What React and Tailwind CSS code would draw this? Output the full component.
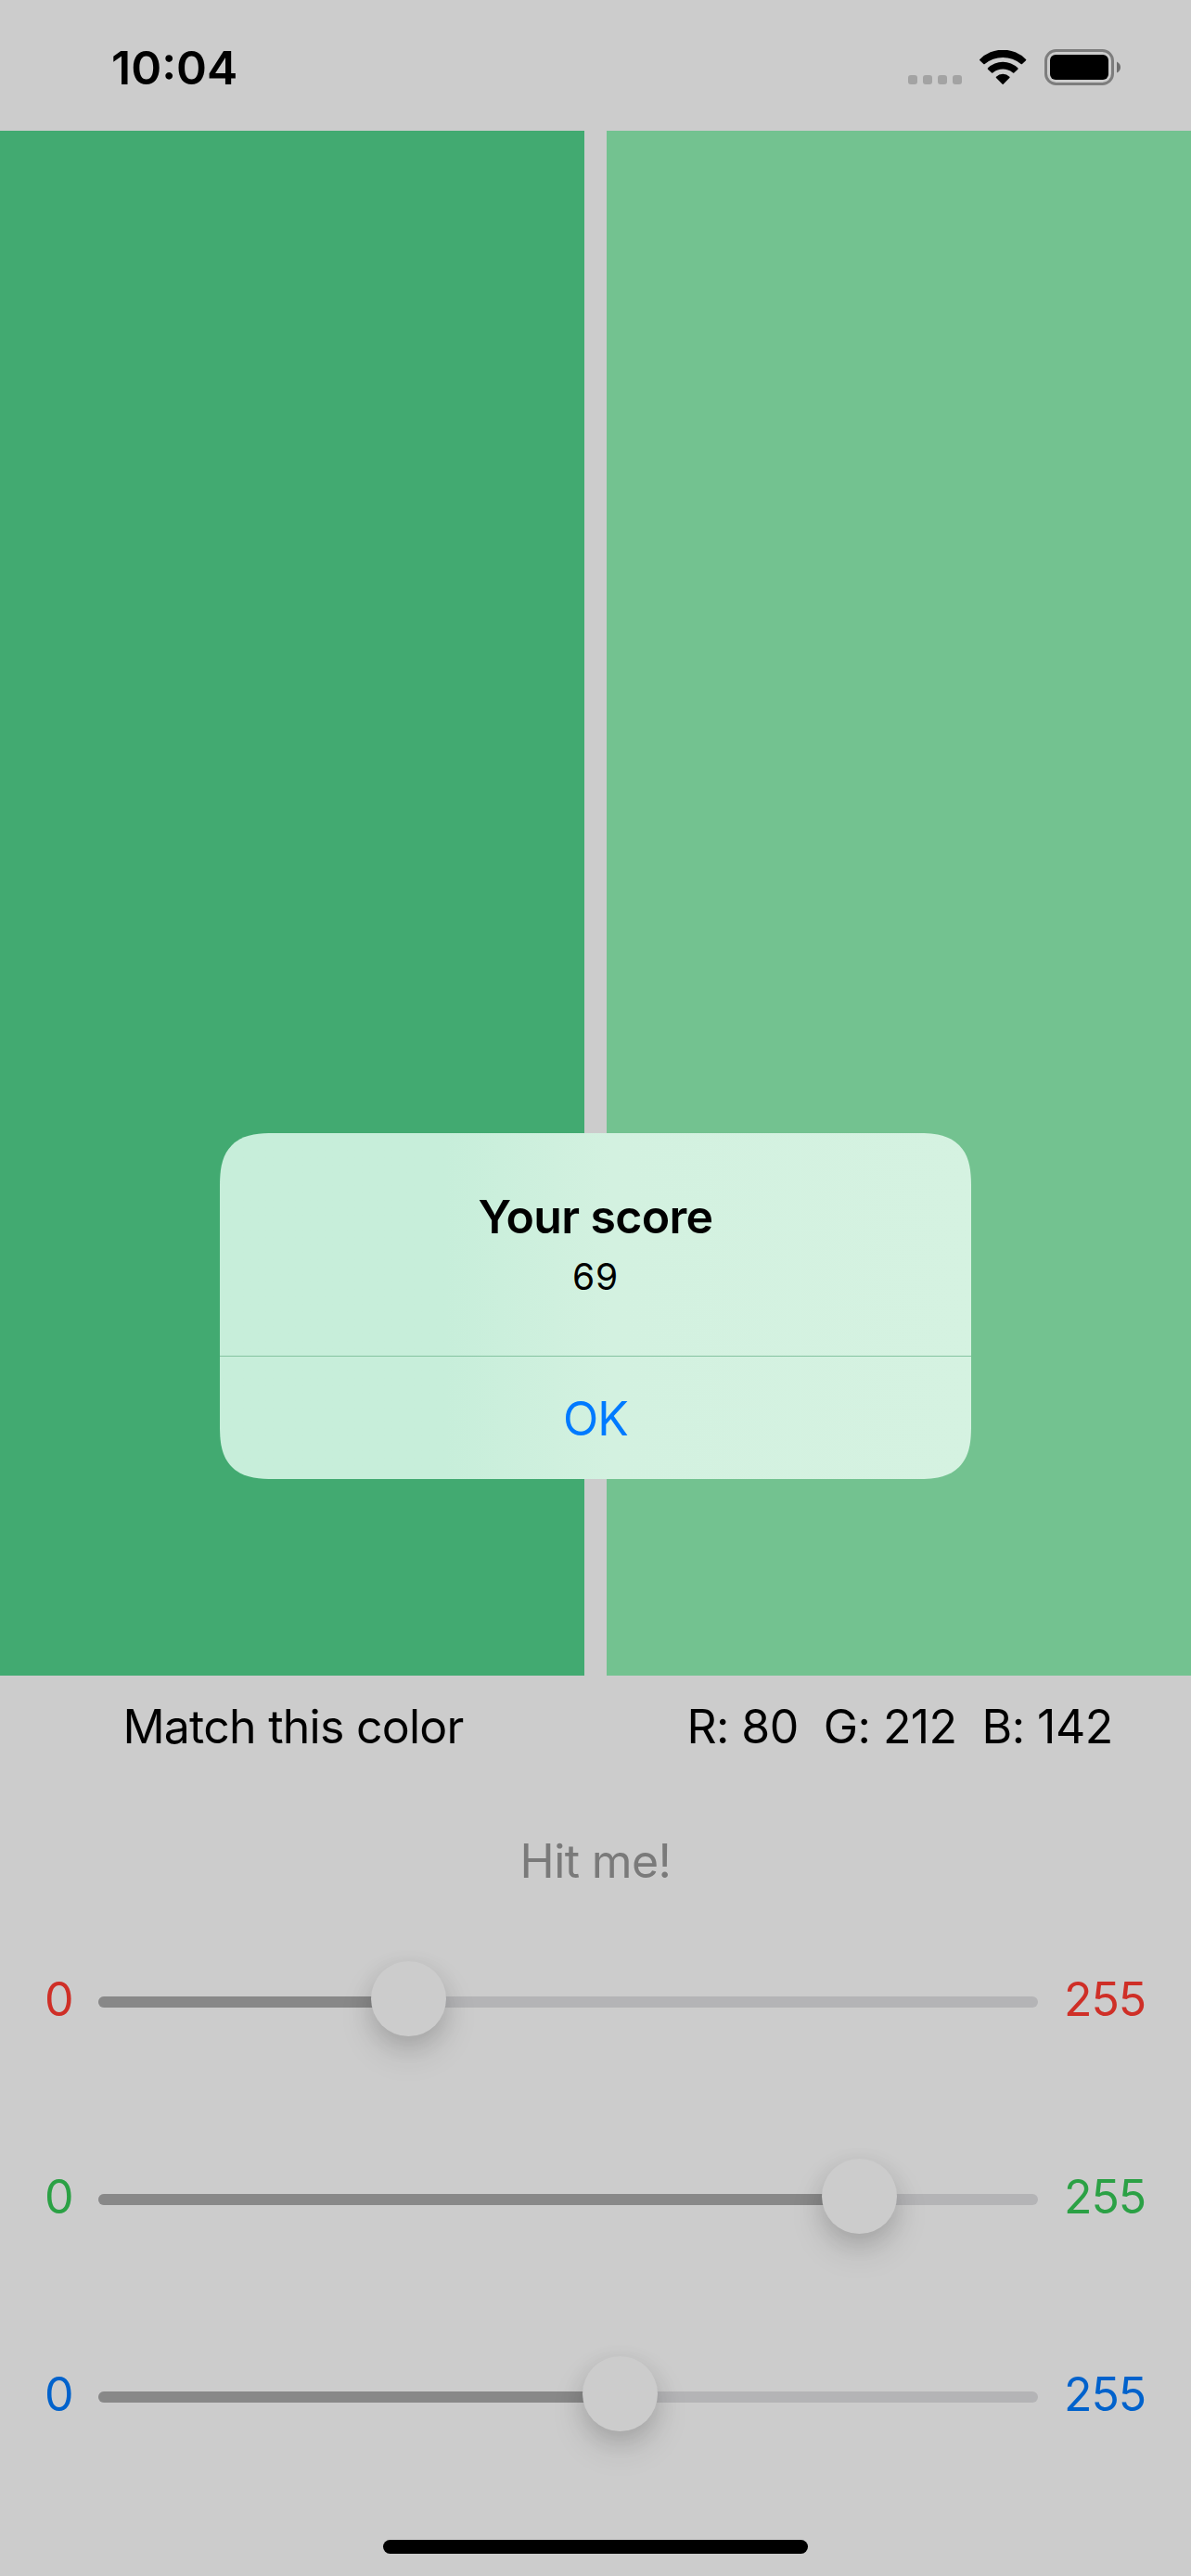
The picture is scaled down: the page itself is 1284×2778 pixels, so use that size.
const channels = [
  { name: "red", value: 80, color: "text-[#cf2f27]", left: 294 },
  { name: "green", value: 212, color: "text-[#2ba145]", left: 780 },
  { name: "blue", value: 142, color: "text-[#0062cc]", left: 522 },
];

function StatusBar() {
  return (
    <header className="flex h-[141px] shrink-0 items-start justify-between pl-[120px] pr-[76px]">
      <time className="mt-[43px] text-[50px] leading-[60px] font-semibold">10:04</time>
      <div className="mt-[53px] flex h-[39px]">
        <div className="mt-7 mr-[19.5px] flex gap-1.5">
          {[0, 1, 2, 3].map((n) => (
            <span key={n} className="size-2.5 rounded-[3px] bg-[#a3a3a3]" />
          ))}
        </div>
        <svg className="mt-px mr-[19.5px] h-[37px] w-[50.33px]" viewBox="289 72 151 111">
          <path d="M290 102 A105 105 0 0 1 439 102 Q441 104 439 106 L427 117 Q425 119 423 117 A91 91 0 0 0 306 117 Q304 119 302 117 L290 106 Q288 104 290 102Z" />
          <path d="M316 130 A69 69 0 0 1 413 130 Q415 132 413 134 L400 146 Q398 147 396 145 A49.5 49.5 0 0 0 333 145 Q331 147 329 146 L316 134 Q314 132 316 130Z" />
          <path d="M343 158 A31 31 0 0 1 386 158 Q388 160 386 162 L366 182 Q364.5 183.500 363 182 L343 162 Q341 160 343 158Z" />
        </svg>
        <svg className="h-[39px] w-[82px]" viewBox="0 0 82 39">
          <rect x="1.5" y="1.5" width="72" height="36" rx="11" fill="none" stroke="#7d7d7d" strokeWidth="3" />
          <rect x="6" y="6" width="63" height="27" rx="6" />
          <path d="M78 13.500 Q82 15.500 82 19.500 Q82 23.500 78 25.500Z" fill="#6e6e6e" />
        </svg>
      </div>
    </header>
  );
}

function Slider({ channel }) {
  return (
    <div className="flex h-[213px] items-start">
      <span className={`mt-[31px] w-[106px] pl-12 text-[50px] leading-[60px] ${channel.color}`}>0</span>
      <div className="relative mt-[58px] h-3 w-[1013px] rounded-full bg-[#b4b4b6]">
        <div className="h-3 rounded-l-full bg-[#888888]" style={{ width: channel.left + 40 }} />
        <div
          className="absolute -top-[38px] size-[81px] rounded-full bg-[#cccccc] shadow-[0_18px_39px_rgba(0,0,0,0.11),0_9px_24px_rgba(0,0,0,0.12)]"
          style={{ left: channel.left }}
        />
      </div>
      <span className={`mt-[31px] ml-7 text-[50px] leading-[60px] tracking-[-0.022em] ${channel.color}`}>255</span>
    </div>
  );
}

function ScoreAlert() {
  return (
    <div
      role="alertdialog"
      className="absolute top-[1222px] left-[237px] flex h-[373px] w-[810px] flex-col overflow-hidden rounded-[44px] bg-linear-to-r from-[#c7eeda] from-30% via-[#d3f1e0] via-52% to-[#d5f2e1] text-center supports-[corner-shape:squircle]:rounded-[58px] supports-[corner-shape:squircle]:[corner-shape:superellipse(1.45)]"
    >
      <div className="flex h-60 flex-col items-center pt-[60px]">
        <h1 className="text-[50px] leading-[60px] font-semibold tracking-[-0.013em]">Your score</h1>
        <p className="mt-[11px] text-[39px] leading-[48px] tracking-[0.02em]">69</p>
      </div>
      <div className="h-px bg-[#85c3a1]" />
      <button className="h-[132px] pt-[2px] text-[50px] leading-[60px] tracking-[-0.02em] text-[#007aff]">OK</button>
    </div>
  );
}

export default function App() {
  return (
    <main className="relative flex h-[2778px] w-[1284px] flex-col overflow-hidden bg-[#cccccc] font-['Inter',sans-serif] text-black">
      <StatusBar />
      <section className="flex h-[1666px] shrink-0 gap-6">
        <div className="flex-1 bg-[#42aa71]" />
        <div className="flex-1 bg-[#73c290]" />
      </section>
      <section className="flex h-[110px] shrink-0 gap-6 pt-[25px] text-center text-[50px] leading-[60px]">
        <p className="flex-1 pl-0.5 tracking-[-0.015em]">Match this color</p>
        <p className="flex-1 pl-0.5 tracking-[-0.011em] whitespace-pre">R: 80  G: 212  B: 142</p>
      </section>
      <button className="mt-[60px] h-[60px] text-center text-[50px] leading-[60px] tracking-[-0.012em] text-[#7a7a7a]">Hit me!</button>
      <section className="mt-[58px] flex flex-col">
        {channels.map((channel) => (
          <Slider key={channel.name} channel={channel} />
        ))}
      </section>
      <div className="mt-[5px] h-[15px] w-[458px] shrink-0 self-center rounded-full bg-black" />
      <ScoreAlert />
    </main>
  );
}
